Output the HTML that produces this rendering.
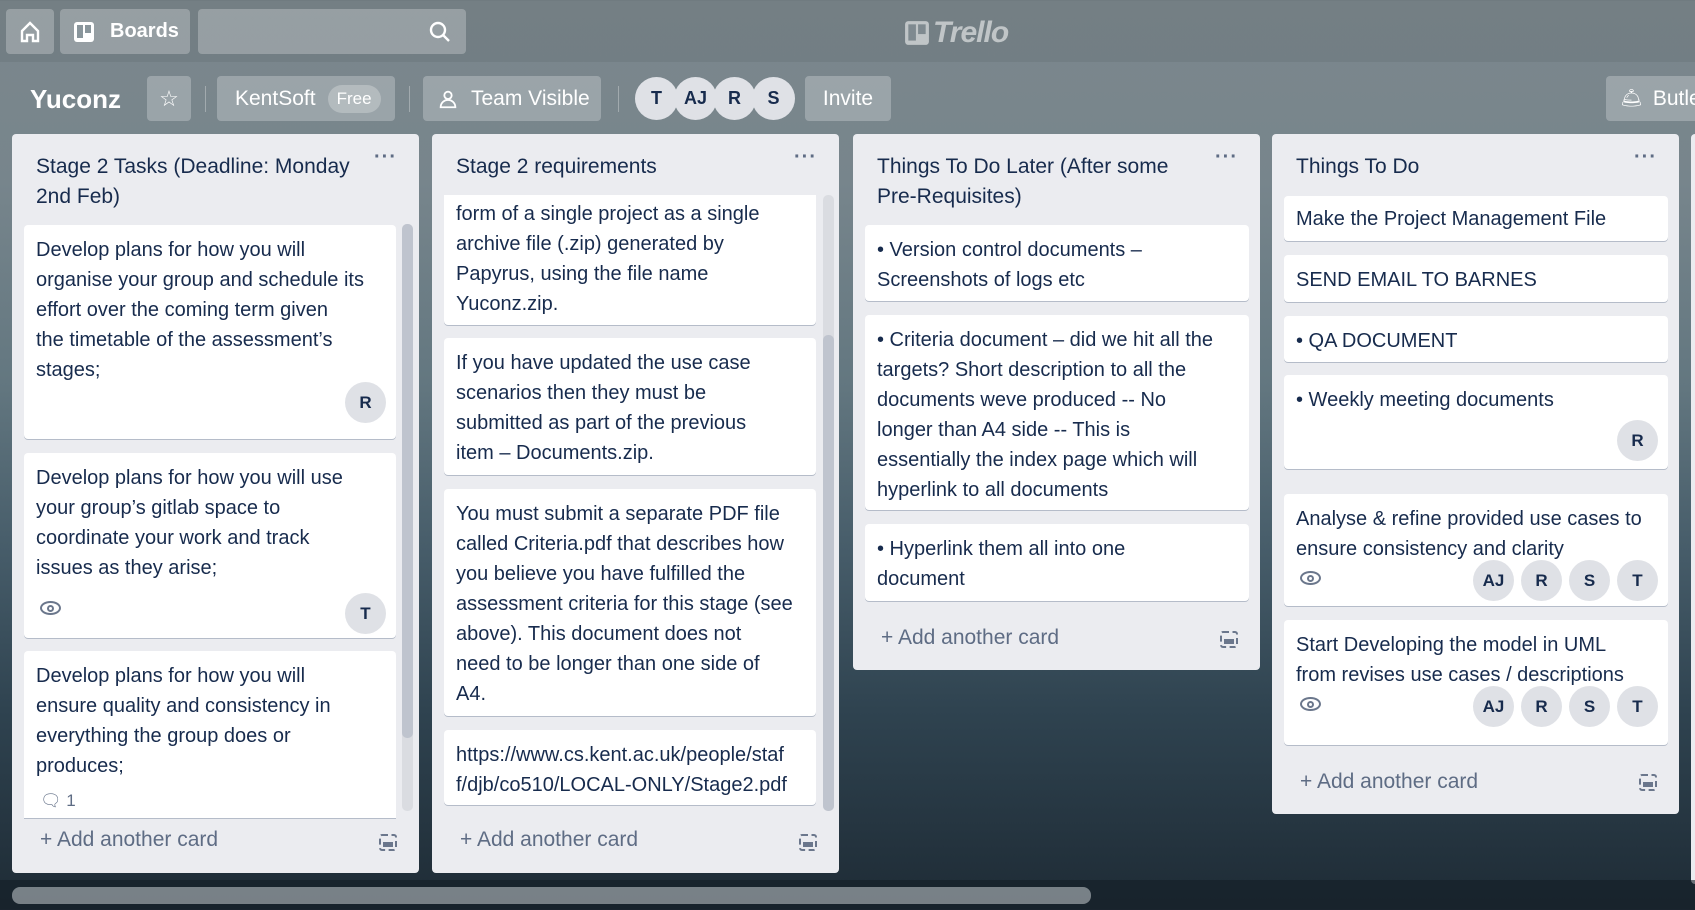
<!DOCTYPE html>
<html><head><meta charset="utf-8"><style>
*{box-sizing:border-box;margin:0;padding:0}
body{width:1695px;height:910px;overflow:hidden;position:relative;font-family:"Liberation Sans",sans-serif;color:#172b4d;
background:linear-gradient(180deg,#7c878d 0%,#77858c 20%,#637780 42%,#475d6a 60%,#2f4350 78%,#1e2b35 100%);}
.btn{position:absolute;background:rgba(255,255,255,.25);border-radius:4px;color:#fff;display:flex;align-items:center;font-size:21px}
.av{position:absolute;width:43px;height:43px;border-radius:50%;background:#dfe1e6;color:#172b4d;font-weight:bold;font-size:18px;display:flex;align-items:center;justify-content:center}
.list{position:absolute;background:#ebecf0;border-radius:4px;width:407px}
.lh{position:absolute;left:24px;top:18px;font-size:21px;line-height:30px;width:340px;white-space:nowrap}
.dots{position:absolute;right:22px;top:12px;font-size:20px;color:#5e6c84;letter-spacing:1px;font-weight:bold}
.card{position:absolute;left:12px;width:372px;background:#fff;border-radius:4px;box-shadow:0 1px 0 #b5bcc9;padding:10px 12px 8px;font-size:20px;line-height:30px;overflow:hidden;white-space:nowrap}
.w{width:384px}
.ca{position:absolute;width:41px;height:41px;border-radius:50%;background:#dfe1e6;font-weight:bold;font-size:17px;display:flex;align-items:center;justify-content:center}
.add{position:absolute;left:28px;font-size:21px;color:#5e6c84}
.tmpl{position:absolute;right:22px;width:18px;height:17px;border:2px dashed #6b778c;border-radius:3px}
.tmpl:after{content:"";position:absolute;left:2px;right:2px;bottom:2px;height:5px;background:#6b778c}
.sb{position:absolute;width:11px;background:#dadce1;border-radius:5px}
.sbt{position:absolute;width:11px;background:#bfc4ce;border-radius:5px}
.eye{position:absolute;width:21px;height:14px;border:2px solid #6b778c;border-radius:50%}
.eye:after{content:"";position:absolute;left:5px;top:2px;width:7px;height:7px;border:2px solid #6b778c;border-radius:50%;box-sizing:border-box}
</style></head><body>
<div style="position:absolute;left:0;top:0;width:1695px;height:62px;background:rgba(0,0,0,.06)"></div>
<div class="btn" style="left:6px;top:9px;width:48px;height:45px;justify-content:center">
<svg width="24" height="24" viewBox="0 0 24 24" fill="none" stroke="#fff" stroke-width="2.4"><path d="M4 11L12 3l8 8v10h-5v-6h-6v6H4z"/></svg></div>
<div class="btn" style="left:60px;top:9px;width:130px;height:45px;font-weight:bold;font-size:20px">
<svg style="margin:0 14px 0 12px" width="24" height="24" viewBox="0 0 24 24"><rect x="2" y="2" width="20" height="20" rx="3" fill="#fff"/><rect x="5" y="5" width="6" height="13" fill="#8a969c"/><rect x="13" y="5" width="6" height="8" fill="#8a969c"/></svg>Boards</div>
<div class="btn" style="left:198px;top:9px;width:268px;height:45px;justify-content:flex-end;padding-right:14px">
<svg width="24" height="24" viewBox="0 0 24 24" fill="none" stroke="#fff" stroke-width="2.4"><circle cx="10" cy="10" r="7"/><path d="M15 15l6 6"/></svg></div>
<div style="position:absolute;left:904px;top:16px;display:flex;align-items:center;color:rgba(255,255,255,.55);font-size:30px;font-weight:bold;font-style:italic;letter-spacing:-1px">
<svg width="26" height="26" viewBox="0 0 24 24" style="margin-right:3px"><rect x="1" y="1" width="22" height="22" rx="3" fill="rgba(255,255,255,.55)"/><rect x="4" y="4" width="7" height="15" fill="#7f8a90"/><rect x="13" y="4" width="7" height="9" fill="#7f8a90"/></svg>Trello</div>

<div style="position:absolute;left:30px;top:84px;color:#fff;font-weight:bold;font-size:26px">Yuconz</div>
<div class="btn" style="left:147px;top:76px;width:44px;height:45px;justify-content:center;font-size:22px">☆</div>
<div style="position:absolute;left:205px;top:86px;width:1px;height:26px;background:rgba(255,255,255,.3)"></div>
<div class="btn" style="left:217px;top:76px;width:178px;height:45px;padding-left:18px">KentSoft<span style="margin-left:12px;background:rgba(255,255,255,.25);border-radius:16px;padding:4px 9px;font-size:17px">Free</span></div>
<div style="position:absolute;left:409px;top:86px;width:1px;height:26px;background:rgba(255,255,255,.3)"></div>
<div class="btn" style="left:423px;top:76px;width:178px;height:45px;padding-left:14px"><svg width="22" height="22" viewBox="0 0 24 24" fill="none" stroke="#fff" stroke-width="2" style="margin-right:12px"><circle cx="12" cy="8" r="4"/><path d="M4 21c0-5 4-8 8-8s8 3 8 8z"/></svg>Team Visible</div>
<div style="position:absolute;left:618px;top:86px;width:1px;height:26px;background:rgba(255,255,255,.3)"></div>
<div class="av" style="left:635px;top:77px">T</div>
<div class="av" style="left:674px;top:77px">AJ</div>
<div class="av" style="left:713px;top:77px">R</div>
<div class="av" style="left:752px;top:77px">S</div>
<div class="btn" style="left:805px;top:76px;width:86px;height:45px;justify-content:center">Invite</div>
<div class="btn" style="left:1606px;top:76px;width:100px;height:45px;padding-left:14px"><span style="font-size:18px;margin-right:10px">🛎</span>Butler</div>

<!-- list 1 -->
<div class="list" style="left:12px;top:134px;height:739px">
<div class="lh">Stage 2 Tasks (Deadline: Monday<br>2nd Feb)</div><div class="dots">···</div>
<div class="card" style="top:91px;height:214px">Develop plans for how you will<br>organise your group and schedule its<br>effort over the coming term given<br>the timetable of the assessment’s<br>stages;<div class="ca" style="right:10px;top:157px">R</div></div>
<div class="card" style="top:319px;height:185px">Develop plans for how you will use<br>your group’s gitlab space to<br>coordinate your work and track<br>issues as they arise;<div class="eye" style="left:16px;top:148px"></div><div class="ca" style="right:10px;top:140px">T</div></div>
<div class="card" style="top:517px;height:167px;border-radius:4px 4px 0 0">Develop plans for how you will<br>ensure quality and consistency in<br>everything the group does or<br>produces;<div style="position:absolute;left:16px;top:135px;font-size:17px;color:#5e6c84">🗨 1</div></div>
<div class="sb" style="left:390px;top:90px;height:587px"></div><div class="sbt" style="left:390px;top:90px;height:514px"></div>
<div class="add" style="top:694px">+ Add another card</div><div class="tmpl" style="top:700px"></div>
</div>

<!-- list 2 -->
<div class="list" style="left:432px;top:134px;height:739px">
<div class="lh">Stage 2 requirements</div><div class="dots">···</div>
<div class="card" style="top:61px;height:130px;border-radius:0 0 4px 4px;padding-top:4px">form of a single project as a single<br>archive file (.zip) generated by<br>Papyrus, using the file name<br>Yuconz.zip.</div>
<div class="card" style="top:204px;height:137px">If you have updated the use case<br>scenarios then they must be<br>submitted as part of the previous<br>item – Documents.zip.</div>
<div class="card" style="top:355px;height:227px">You must submit a separate PDF file<br>called Criteria.pdf that describes how<br>you believe you have fulfilled the<br>assessment criteria for this stage (see<br>above). This document does not<br>need to be longer than one side of<br>A4.</div>
<div class="card" style="top:596px;height:75px">https://www.cs.kent.ac.uk/people/staf<br>f/djb/co510/LOCAL-ONLY/Stage2.pdf</div>
<div class="sb" style="left:391px;top:61px;height:616px"></div><div class="sbt" style="left:391px;top:201px;height:476px"></div>
<div class="add" style="top:694px">+ Add another card</div><div class="tmpl" style="top:700px"></div>
</div>

<!-- list 3 -->
<div class="list" style="left:853px;top:134px;height:536px">
<div class="lh">Things To Do Later (After some<br>Pre-Requisites)</div><div class="dots">···</div>
<div class="card w" style="top:91px;height:76px">• Version control documents –<br>Screenshots of logs etc</div>
<div class="card w" style="top:181px;height:195px">• Criteria document – did we hit all the<br>targets? Short description to all the<br>documents weve produced -- No<br>longer than A4 side -- This is<br>essentially the index page which will<br>hyperlink to all documents</div>
<div class="card w" style="top:390px;height:77px">• Hyperlink them all into one<br>document</div>
<div class="add" style="top:492px">+ Add another card</div><div class="tmpl" style="top:497px"></div>
</div>

<!-- list 4 -->
<div class="list" style="left:1272px;top:134px;height:680px">
<div class="lh">Things To Do</div><div class="dots">···</div>
<div class="card w" style="top:62px;height:45px;padding-top:8px">Make the Project Management File</div>
<div class="card w" style="top:121px;height:47px">SEND EMAIL TO BARNES</div>
<div class="card w" style="top:182px;height:46px">• QA DOCUMENT</div>
<div class="card w" style="top:241px;height:94px">• Weekly meeting documents<div class="ca" style="right:10px;top:45px">R</div></div>
<div class="card w" style="top:360px;height:112px">Analyse &amp; refine provided use cases to<br>ensure consistency and clarity<div class="eye" style="left:16px;top:77px"></div><div class="ca" style="right:154px;top:66px">AJ</div><div class="ca" style="right:106px;top:66px">R</div><div class="ca" style="right:58px;top:66px">S</div><div class="ca" style="right:10px;top:66px">T</div></div>
<div class="card w" style="top:486px;height:125px">Start Developing the model in UML<br>from revises use cases / descriptions<div class="eye" style="left:16px;top:77px"></div><div class="ca" style="right:154px;top:66px">AJ</div><div class="ca" style="right:106px;top:66px">R</div><div class="ca" style="right:58px;top:66px">S</div><div class="ca" style="right:10px;top:66px">T</div></div>
<div class="add" style="top:636px">+ Add another card</div><div class="tmpl" style="top:640px"></div>
</div>
<div style="position:absolute;left:1691px;top:134px;width:10px;height:750px;background:#ebecf0;border-radius:4px"></div>

<div style="position:absolute;left:0;top:880px;width:1695px;height:30px;background:rgba(20,30,38,.6)"></div>
<div style="position:absolute;left:12px;top:887px;width:1079px;height:17px;background:rgba(200,205,210,.55);border-radius:8px"></div>
</body></html>
